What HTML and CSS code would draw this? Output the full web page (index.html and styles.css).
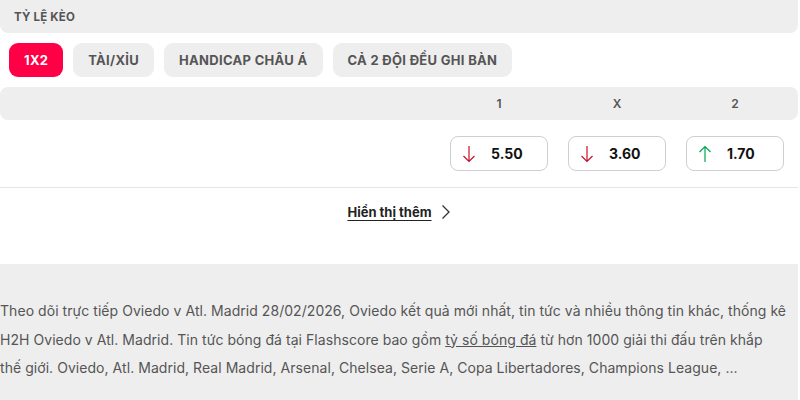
FILE: index.html
```html
<!DOCTYPE html>
<html lang="vi">
<head>
<meta charset="utf-8">
<link rel="stylesheet" href="styles.css">
</head>
<body>
<div class="page">
  <div class="section-head">TỶ LỆ KÈO</div>
  <div class="tabs">
    <span class="tab active">1X2</span>
    <span class="tab">TÀI/XỈU</span>
    <span class="tab">HANDICAP CHÂU Á</span>
    <span class="tab">CẢ 2 ĐỘI ĐỀU GHI BÀN</span>
  </div>
  <div class="odds-head">
    <span class="col">1</span>
    <span class="col">X</span>
    <span class="col">2</span>
  </div>
  <div class="odds-row">
    <div class="odd">
      <svg class="arrow down" viewBox="0 0 14 18" width="14" height="18"><path d="M7 1V16.5M1.5 11L7 16.5L12.5 11" fill="none" stroke="currentColor" stroke-width="1.2"/></svg>
      <span class="val">5.50</span>
    </div>
    <div class="odd">
      <svg class="arrow down" viewBox="0 0 14 18" width="14" height="18"><path d="M7 1V16.5M1.5 11L7 16.5L12.5 11" fill="none" stroke="currentColor" stroke-width="1.2"/></svg>
      <span class="val">3.60</span>
    </div>
    <div class="odd">
      <svg class="arrow up" viewBox="0 0 14 18" width="14" height="18"><path d="M7 17V1.5M1.5 7L7 1.5L12.5 7" fill="none" stroke="currentColor" stroke-width="1.2"/></svg>
      <span class="val">1.70</span>
    </div>
  </div>
  <div class="more">
    <a class="more-link" href="#">Hiển thị thêm</a>
    <svg class="chev" viewBox="0 0 10 16" width="10" height="16"><path d="M1.5 1.5L8 8L1.5 14.5" fill="none" stroke="currentColor" stroke-width="1.3"/></svg>
  </div>
  <div class="seo">
    <p>Theo dõi trực tiếp Oviedo v Atl. Madrid 28/02/2026, Oviedo kết quả mới nhất, tin tức và nhiều thông tin khác, thống kê H2H Oviedo v Atl. Madrid. Tin tức bóng đá tại Flashscore bao gồm <a href="#">tỷ số bóng đá</a> từ hơn 1000 giải thi đấu trên khắp <span class="nw">thế giới.</span> Oviedo, Atl. Madrid, Real Madrid, Arsenal, Chelsea, Serie A, Copa Libertadores, Champions League, ...</p>
  </div>
</div>
</body>
</html>
```
FILE: styles.css
```css
* { box-sizing: border-box; }
html, body { margin: 0; padding: 0; background: #fff; }
body { font-family: Inter, "Noto Sans", sans-serif; color: #555; }
.page { width: 798px; }
.section-head {
  height: 33px;
  background: #eeeeee;
  border-radius: 0 0 8px 8px;
  padding-left: 14px;
  display: flex;
  align-items: center;
  font-size: 11.5px;
  font-weight: 700;
  color: #555;
  letter-spacing: 0.2px;
}
.tabs {
  display: flex;
  gap: 10px;
  padding: 10px 9px;
}
.tab {
  height: 34px;
  display: flex;
  align-items: center;
  padding: 0 15px;
  border-radius: 9px;
  background: #eeeeee;
  font-size: 13px;
  font-weight: 700;
  color: #555;
  letter-spacing: 0.3px;
}
.tab.active { background: #ff0046; color: #fff; }
.odds-head {
  height: 33px;
  background: #eeeeee;
  border-radius: 8px;
  display: flex;
  justify-content: flex-end;
  align-items: center;
  gap: 20px;
  padding-right: 14px;
}
.col {
  width: 98px;
  text-align: center;
  font-size: 12px;
  font-weight: 600;
  color: #555;
}
.odds-row {
  display: flex;
  justify-content: flex-end;
  gap: 20px;
  padding: 16px 14px 16px 0;
  border-bottom: 1px solid #e6e6e6;
}
.odd {
  width: 98px;
  height: 35px;
  border: 1px solid #cfcfcf;
  border-radius: 8px;
  display: flex;
  align-items: center;
  padding-left: 11px;
  gap: 15px;
}
.arrow { display: block; }
.arrow.down { color: #c8102e; }
.arrow.up { color: #00a651; }
.val { font-size: 14px; font-weight: 700; color: #111; }
.more {
  height: 76px;
  display: flex;
  justify-content: center;
  align-items: flex-start;
  padding-top: 16px;
  gap: 9px;
}
.more-link {
  font-size: 13px;
  font-weight: 700;
  color: #222;
  text-decoration: underline;
  text-underline-offset: 3px;
  line-height: 16px;
}
.chev { color: #333; display: block; }
.seo {
  background: #eeeeee;
  padding: 33px 0 20px 0;
}
.seo p {
  margin: 0;
  font-size: 14px;
  line-height: 28.5px;
  color: #555;
  width: 798px;
  letter-spacing: 0.05px;
}
.seo a { color: #555; text-decoration: underline; }
.nw { white-space: nowrap; }
```
